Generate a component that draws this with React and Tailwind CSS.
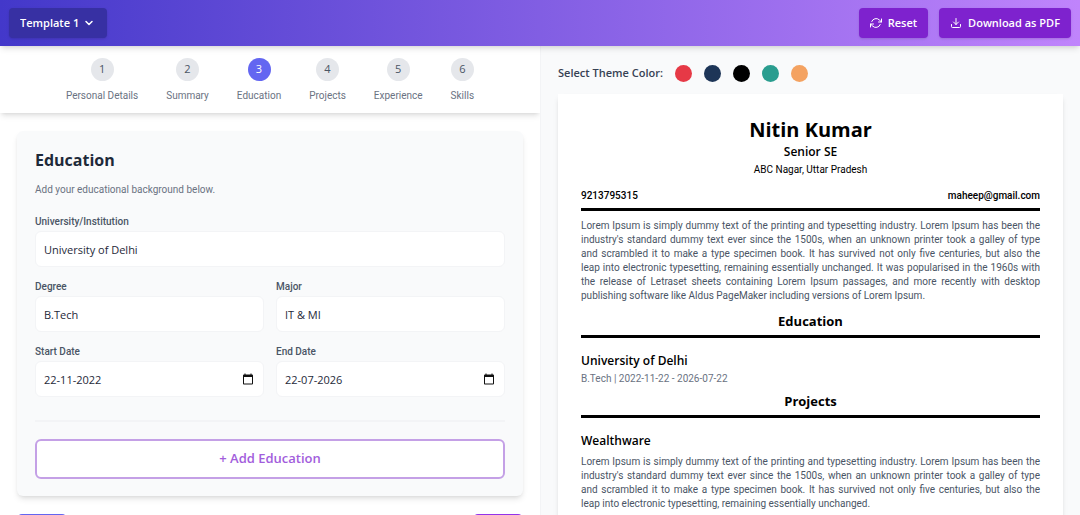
import { useState } from 'react';
import {
  FiChevronDown,
  FiChevronLeft,
  FiChevronRight,
  FiDownload,
  FiRefreshCw,
} from 'react-icons/fi';

const steps = [
  'Personal Details',
  'Summary',
  'Education',
  'Projects',
  'Experience',
  'Skills',
];

const themes = [
  { name: 'Red', className: 'bg-[#e63946]' },
  { name: 'Navy', className: 'bg-[#1d3557]' },
  { name: 'Black', className: 'bg-black' },
  { name: 'Teal', className: 'bg-[#2a9d8f]' },
  { name: 'Orange', className: 'bg-[#f4a261]' },
];

const Header = () => {
  return (
    <header className="z-10 flex items-center justify-between bg-[linear-gradient(to_right,#4338ca,#c084fc)] px-[9px] py-2 shadow-md">
      <div className="relative flex items-center text-white">
        <select
          aria-label="Template"
          className="h-[30px] w-[98px] appearance-none rounded-sm bg-[#3730a3] pl-[11px] text-[11px] font-semibold shadow-sm"
        >
          <option>Template 1</option>
          <option>Template 2</option>
        </select>
        <FiChevronDown
          size={12}
          strokeWidth={3}
          className="pointer-events-none absolute right-3"
        />
      </div>
      <div className="flex gap-[11px]">
        <button className="flex h-[30px] items-center gap-1.5 rounded-sm bg-[#7e22ce] px-[11px] text-[11px] font-semibold text-white shadow-sm">
          <FiRefreshCw size={12} />
          Reset
        </button>
        <button className="flex h-[30px] items-center gap-1.5 rounded-sm bg-[#7e22ce] px-[11px] text-[11px] font-semibold text-white shadow-sm">
          <FiDownload size={12} />
          Download as PDF
        </button>
      </div>
    </header>
  );
};

const Stepper = ({ active }) => {
  return (
    <ol className="flex shrink-0 justify-center gap-7 pt-3 pb-[9px] shadow-md">
      {steps.map((step, i) => (
        <li key={step} className="flex flex-col items-center gap-[7px]">
          <span
            className={
              i === active
                ? 'flex size-[23px] items-center justify-center rounded-full bg-[#6366f1] text-[11px] text-white'
                : 'flex size-[23px] items-center justify-center rounded-full bg-gray-200 text-[11px] text-gray-600'
            }
          >
            {i + 1}
          </span>
          <span className="font-[Roboto,sans-serif] text-[10px] leading-4 text-gray-500">
            {step}
          </span>
        </li>
      ))}
    </ol>
  );
};

const Field = ({ id, label, value, date }) => {
  return (
    <div>
      <label
        htmlFor={id}
        className="block font-[Roboto,sans-serif] text-[10px] leading-4 font-medium text-gray-600"
      >
        {label}
      </label>
      <div className="relative mt-px flex items-center">
        <input
          id={id}
          defaultValue={value}
          className="h-9 w-full rounded-md border border-gray-100 bg-white px-2 text-[11px] text-gray-800"
        />
        {date && (
          <svg
            viewBox="0 0 24 24"
            className="pointer-events-none absolute right-2.5 size-3"
            aria-hidden="true"
          >
            <path
              fill="#111"
              d="M20 3h-1V1h-2v2H7V1H5v2H4a2 2 0 0 0-2 2v16c0 1.100.9 2 2 2h16a2 2 0 0 0 2-2V5a2 2 0 0 0-2-2zm0 18H4V8h16v13z"
            />
          </svg>
        )}
      </div>
    </div>
  );
};

const EducationForm = () => {
  return (
    <form className="mx-[17px] my-[18px] rounded-md bg-[#f9fafb] px-[18px] py-[17px] shadow-md">
      <h2 className="text-[16px] leading-6 font-bold text-gray-800">
        Education
      </h2>
      <p className="mt-2.5 font-[Roboto,sans-serif] text-[10px] leading-4 text-gray-500">
        Add your educational background below.
      </p>
      <div className="mt-4 border-b-2 border-gray-100 pb-[23px]">
        <Field
          id="university"
          label="University/Institution"
          value="University of Delhi"
        />
        <div className="mt-3 grid grid-cols-2 gap-3">
          <Field id="degree" label="Degree" value="B.Tech" />
          <Field id="major" label="Major" value="IT & MI" />
          <Field id="start" label="Start Date" value="22-11-2022" date />
          <Field id="end" label="End Date" value="22-07-2026" date />
        </div>
      </div>
      <button
        type="button"
        className="mt-[17px] h-10 w-full rounded-md border-2 border-[#c4a0e6] bg-white text-[13px] font-semibold text-[#a25ddc]"
      >
        + Add Education
      </button>
    </form>
  );
};

const SectionTitle = ({ children }) => {
  return (
    <h3 className="border-b-3 border-black pb-1 text-center text-[13px] leading-5 font-bold">
      {children}
    </h3>
  );
};

const Resume = () => {
  return (
    <article className="mt-3 bg-white px-[23px] pt-6 pb-8 text-black shadow-md">
      <div className="text-center">
        <h1 className="text-[20px] leading-6 font-bold">Nitin Kumar</h1>
        <p className="text-[12px] leading-5 font-semibold">Senior SE</p>
        <p className="font-[Roboto,sans-serif] text-[10px] leading-4">
          ABC Nagar, Uttar Pradesh
        </p>
      </div>
      <div className="mt-2.5 flex justify-between border-b-3 border-black pb-1 font-[Roboto,sans-serif] text-[10px] leading-4 font-medium">
        <span>9213795315</span>
        <span>maheep@gmail.com</span>
      </div>
      <p className="my-2 text-justify font-[Roboto,sans-serif] text-[10px] leading-[14px] text-gray-600">
        Lorem Ipsum is simply dummy text of the printing and typesetting
        industry. Lorem Ipsum has been the industry&apos;s standard dummy text
        ever since the 1500s, when an unknown printer took a galley of type
        and&nbsp;scrambled it to make a type specimen book. It has survived not
        only five centuries, but also the leap&nbsp;into electronic typesetting,
        remaining essentially unchanged. It was popularised in the 1960s with
        the&nbsp;release of Letraset sheets containing Lorem Ipsum passages, and
        more recently with desktop publishing software like Aldus PageMaker
        including versions of Lorem Ipsum.
      </p>
      <SectionTitle>Education</SectionTitle>
      <h4 className="mt-[13px] text-[12px] leading-5 font-semibold">
        University of Delhi
      </h4>
      <p className="mb-1 font-[Roboto,sans-serif] text-[10px] leading-4 text-gray-500">
        B.Tech | 2022-11-22 - 2026-07-22
      </p>
      <SectionTitle>Projects</SectionTitle>
      <h4 className="mt-[13px] text-[12px] leading-5 font-semibold">
        Wealthware
      </h4>
      <p className="mt-1 text-justify font-[Roboto,sans-serif] text-[10px] leading-[14px] text-gray-600">
        Lorem Ipsum is simply dummy text of the printing and typesetting
        industry. Lorem Ipsum has been the industry&apos;s standard dummy text
        ever since the 1500s, when an unknown printer took a galley of type
        and&nbsp;scrambled it to make a type specimen book. It has survived not
        only five centuries, but also the leap&nbsp;into electronic typesetting,
        remaining essentially unchanged.
      </p>
    </article>
  );
};

const App = () => {
  const [active] = useState(2);

  return (
    <div className="flex h-screen flex-col overflow-hidden bg-white font-['Open_Sans',sans-serif]">
      <Header />
      <main className="grid min-h-0 flex-1 grid-cols-2">
        <section className="flex min-h-0 flex-col overflow-hidden">
          <Stepper active={active} />
          <EducationForm />
          <div className="flex shrink-0 justify-between px-[18px]">
            <button
              aria-label="Back"
              className="flex h-8 w-12 items-center justify-center rounded-sm bg-[#6366f1] text-white"
            >
              <FiChevronLeft size={12} />
            </button>
            <button
              aria-label="Next"
              className="flex h-8 w-12 items-center justify-center rounded-sm bg-[#9333ea] text-white"
            >
              <FiChevronRight size={12} />
            </button>
          </div>
        </section>
        <section className="min-h-0 overflow-hidden border-l border-gray-100 bg-[#f9fafb] px-[17px] pt-[18px]">
          <div className="flex items-center gap-3">
            <span className="text-[11px] leading-[18px] font-semibold text-gray-700">
              Select Theme Color:
            </span>
            {themes.map((theme) => (
              <button
                key={theme.name}
                aria-label={theme.name}
                className={`size-[17px] rounded-full ${theme.className}`}
              />
            ))}
          </div>
          <Resume />
        </section>
      </main>
    </div>
  );
};

export default App;
